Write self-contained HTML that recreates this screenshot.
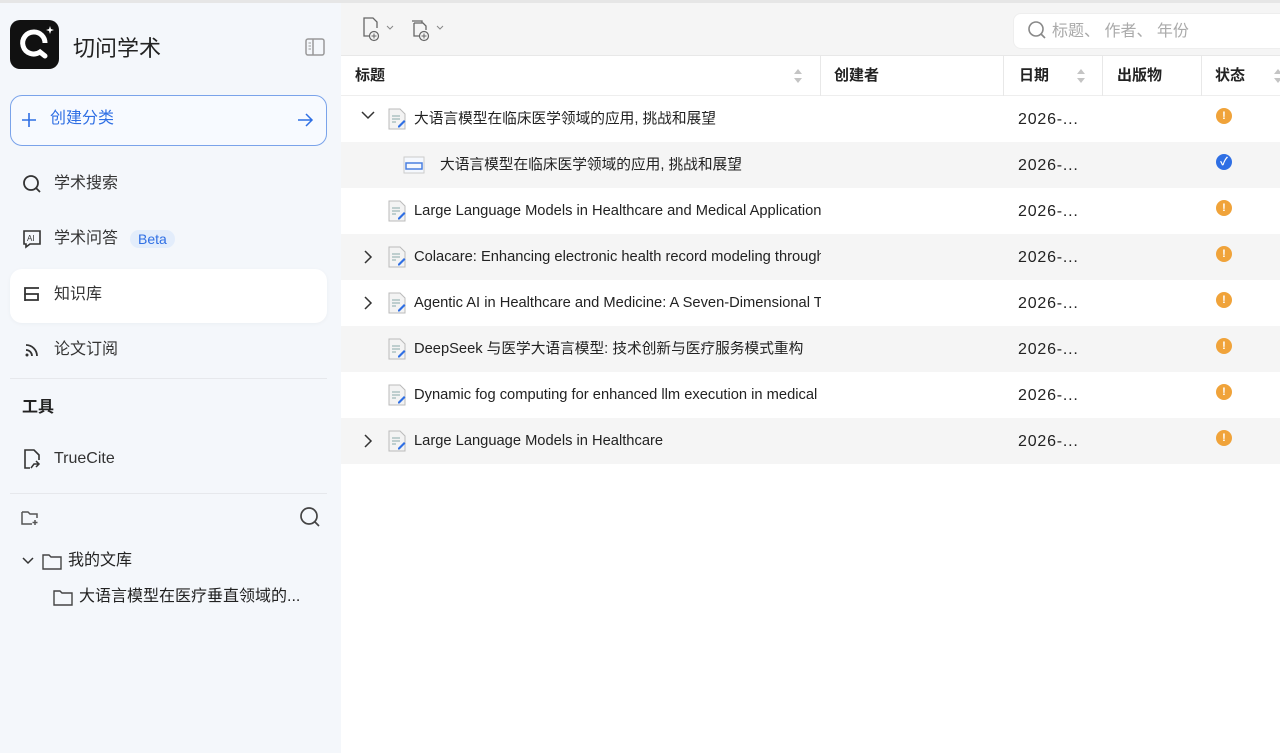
<!DOCTYPE html>
<html><head><meta charset="utf-8"><style>
*{box-sizing:border-box;margin:0;padding:0}
body{width:1280px;height:753px;overflow:hidden;font-family:"Liberation Sans","Noto Sans CJK SC",sans-serif;background:#fff;position:relative;color:#222;line-height:1.2}
.side{position:absolute;left:0;top:0;width:341px;height:753px;background:#f4f7fb;border-top:3px solid #e6e6e6}
.abs{position:absolute}
.nav{position:absolute;left:22px;font-size:16px;color:#333;display:flex;align-items:center;gap:12px}
.main{position:absolute;left:341px;top:0;right:0;height:753px}
.tb{position:absolute;left:0;top:0;right:0;height:56px;background:#f5f5f5;border-top:3px solid #e6e6e6;border-bottom:1px solid #e8e8e8}
.hd{position:absolute;top:56px;left:0;right:0;height:40px;background:#fff;border-bottom:1px solid #eee;font-size:15px;font-weight:bold;color:#222}
.hd span{position:absolute;top:11px}
.vl{position:absolute;top:56px;height:40px;width:1px;background:#e8e8e8}
.row{position:absolute;left:0;right:0;height:46px;font-size:14.7px;color:#222}
.row.g{background:#f5f5f5}
.row .t{position:absolute;top:15px;white-space:nowrap;overflow:hidden;width:407px}
.row .d{position:absolute;left:677px;top:14px;font-size:16px;letter-spacing:0.8px}
.st{position:absolute;left:875px;top:12px;width:16px;height:16px;border-radius:50%;background:#f0a33a;color:#fff;font-size:11px;text-align:center;line-height:16px;font-weight:bold}
.st.ok{background:#2f6fe4}
.doc{position:absolute;top:12px}
.chev{position:absolute;left:20px;top:14px}
.sort{position:absolute;top:12px;width:8px}
</style></head><body>
<div class="side">
  <div class="abs" style="left:10px;top:17px;width:49px;height:49px;background:#111;border-radius:10px">
    <svg width="49" height="49" viewBox="0 0 49 49"><path d="M24 12a11 11 0 1 0 6 20l5 4" fill="none" stroke="#fff" stroke-width="5" stroke-linecap="round"/><path d="M24 12a11 11 0 0 1 11 11" fill="none" stroke="#fff" stroke-width="5"/><path d="M40 6l1 3 3 1-3 1-1 3-1-3-3-1 3-1z" fill="#fff"/></svg>
  </div>
  <div class="abs" style="left:73px;top:33px;font-size:22px;color:#222">切问学术</div>
  <svg class="abs" style="left:305px;top:35px" width="20" height="18"><rect x="1" y="1" width="18" height="16" rx="2" fill="none" stroke="#999" stroke-width="1.5"/><line x1="8" y1="1" x2="8" y2="17" stroke="#999" stroke-width="1.5"/><line x1="3.5" y1="5" x2="6" y2="5" stroke="#999"/><line x1="3.5" y1="8" x2="6" y2="8" stroke="#999"/><line x1="3.5" y1="11" x2="6" y2="11" stroke="#999"/></svg>
  <div class="abs" style="left:10px;top:92px;width:317px;height:51px;border:1px solid #7aa3ea;border-radius:12px;background:#f7faff"></div>
  <svg class="abs" style="left:22px;top:110px" width="14" height="14"><path d="M7 0v14M0 7h14" stroke="#2f6fe4" stroke-width="1.6"/></svg>
  <div class="abs" style="left:50px;top:106px;font-size:16px;color:#2f6fe4">创建分类</div>
  <svg class="abs" style="left:297px;top:110px" width="17" height="14"><path d="M1 7h14M9 1l6 6-6 6" fill="none" stroke="#2f6fe4" stroke-width="1.5"/></svg>
  <div class="nav" style="top:171px"><svg width="20" height="20"><circle cx="9" cy="9" r="7" fill="none" stroke="#333" stroke-width="1.8"/><line x1="14" y1="14" x2="18" y2="18" stroke="#333" stroke-width="1.8"/></svg><span>学术搜索</span></div>
  <div class="nav" style="top:226px"><svg width="20" height="20"><path d="M2 2h16v13H8l-4 3v-3H2z" fill="none" stroke="#333" stroke-width="1.6"/><text x="5" y="12" font-size="8" font-family="Liberation Sans" fill="#333">AI</text></svg><span>学术问答</span><span style="background:#e3edfb;color:#2f6fe4;font-size:14px;padding:1px 8px;border-radius:9px;margin-left:0">Beta</span></div>
  <div class="abs" style="left:10px;top:266px;width:317px;height:54px;background:#fff;border-radius:12px;box-shadow:0 1px 4px rgba(0,0,0,.04)"></div>
  <div class="nav" style="top:282px"><svg width="20" height="20"><path d="M17 3H3v6h13v6H3" fill="none" stroke="#333" stroke-width="1.8"/><line x1="3" y1="9" x2="3" y2="16" stroke="#333" stroke-width="1.8"/></svg><span>知识库</span></div>
  <div class="nav" style="top:337px"><svg width="20" height="20"><circle cx="5" cy="15" r="1.5" fill="#333"/><path d="M4 10a6 6 0 0 1 6 6M4 5a11 11 0 0 1 11 11" fill="none" stroke="#333" stroke-width="1.8"/></svg><span>论文订阅</span></div>
  <div class="abs" style="left:10px;top:375px;width:317px;height:1px;background:#e6e8ec"></div>
  <div class="abs" style="left:22px;top:395px;font-size:16px;font-weight:bold;color:#222">工具</div>
  <div class="nav" style="top:445px"><svg width="20" height="22"><path d="M8 20H3V2h9l5 5v5" fill="none" stroke="#333" stroke-width="1.6"/><path d="M9 20l3-4h5M14 13l3 3-3 3" fill="none" stroke="#333" stroke-width="1.5"/></svg><span>TrueCite</span></div>
  <div class="abs" style="left:10px;top:490px;width:317px;height:1px;background:#e6e8ec"></div>
  <svg class="abs" style="left:21px;top:507px" width="18" height="16"><path d="M1 2h6l2 2h7v4M1 2v12h10" fill="none" stroke="#555" stroke-width="1.5"/><path d="M14 10v5M11.5 12.5h5" stroke="#555" stroke-width="1.5"/></svg>
  <svg class="abs" style="left:299px;top:503px" width="22" height="22"><circle cx="10" cy="10" r="8" fill="none" stroke="#444" stroke-width="1.7"/><line x1="16" y1="16" x2="20" y2="20" stroke="#444" stroke-width="1.7"/></svg>
  <svg class="abs" style="left:21px;top:553px" width="14" height="10"><path d="M2 2l5 5 5-5" fill="none" stroke="#333" stroke-width="1.5"/></svg>
  <svg class="abs" style="left:42px;top:550px" width="20" height="17"><path d="M1 2h6l2 2h10v12H1z" fill="none" stroke="#444" stroke-width="1.4"/></svg>
  <div class="abs" style="left:68px;top:548px;font-size:16px;color:#222">我的文库</div>
  <svg class="abs" style="left:53px;top:586px" width="20" height="17"><path d="M1 2h6l2 2h10v12H1z" fill="none" stroke="#444" stroke-width="1.4"/></svg>
  <div class="abs" style="left:79px;top:584px;font-size:16px;color:#222">大语言模型在医疗垂直领域的...</div>
</div>
<div class="main">
  <div class="tb">
    <svg class="abs" style="left:20px;top:13px" width="38" height="26"><path d="M12 20H3V2h9l4 4v6" fill="none" stroke="#666" stroke-width="1.3"/><circle cx="13" cy="20" r="4.5" fill="#f5f5f5" stroke="#666" stroke-width="1.2"/><path d="M13 17.5v5M10.5 20h5" stroke="#666"/><path d="M26 10l3 3 3-3" fill="none" stroke="#888"/></svg>
    <svg class="abs" style="left:68px;top:13px" width="38" height="26"><path d="M3 5h10v2M5 7v13h6M5 7h9l3 3v4" fill="none" stroke="#666" stroke-width="1.3"/><circle cx="15" cy="20" r="4.5" fill="#f5f5f5" stroke="#666" stroke-width="1.2"/><path d="M15 17.5v5M12.5 20h5" stroke="#666"/><path d="M28 10l3 3 3-3" fill="none" stroke="#888"/></svg>
    <div class="abs" style="left:672px;top:10px;width:280px;height:36px;background:#fff;border:1px solid #eee;border-radius:8px"></div>
    <svg class="abs" style="left:686px;top:17px" width="22" height="22"><circle cx="9" cy="9" r="7" fill="none" stroke="#888" stroke-width="1.6"/><line x1="14" y1="14" x2="18" y2="18" stroke="#888" stroke-width="1.6"/></svg>
    <div class="abs" style="left:711px;top:19px;font-size:16px;color:#aaa">标题、 作者、 年份</div>
  </div>
  <div class="hd">
    <span style="left:14px">标题</span><span style="left:493px">创建者</span><span style="left:678px">日期</span><span style="left:776px">出版物</span><span style="left:874px">状态</span>
  </div>
  <div class="vl" style="left:479px"></div><div class="vl" style="left:662px"></div><div class="vl" style="left:761px"></div><div class="vl" style="left:860px"></div>
  <svg class="sort" style="left:453px;top:68px" width="8" height="16"><path d="M0 6l4-5 4 5zM0 10l4 5 4-5z" fill="#c4c4c4"/></svg>
  <svg class="sort" style="left:736px;top:68px" width="8" height="16"><path d="M0 6l4-5 4 5zM0 10l4 5 4-5z" fill="#c4c4c4"/></svg>
  <svg class="sort" style="left:933px;top:68px" width="8" height="16"><path d="M0 6l4-5 4 5zM0 10l4 5 4-5z" fill="#c4c4c4"/></svg>

  <div class="row" style="top:96px"><svg class="chev" width="14" height="10"><path d="M1 2l6 6 6-6" fill="none" stroke="#333" stroke-width="1.5"/></svg><svg class="doc" style="left:46px" width="20" height="22"><path d="M2 1h11l5 5v15H2z" fill="#f3f3f3" stroke="#bbb"/><path d="M5 8h8M5 11h8M5 14h4" stroke="#8aa"/><path d="M11 18l6-6 1.5 1.5-6 6H11z" fill="#2f6fe4"/></svg><div class="t" style="left:73px">大语言模型在临床医学领域的应用, 挑战和展望</div><div class="d">2026-...</div><div class="st">!</div></div>
  <div class="row g" style="top:142px"><svg class="doc" style="left:62px;top:14px" width="22" height="18"><rect x="1" y="1" width="20" height="16" fill="#f5f8fd" stroke="#ccc"/><rect x="3" y="7" width="16" height="6" fill="none" stroke="#4a7fe0" stroke-width="1.5"/></svg><div class="t" style="left:99px">大语言模型在临床医学领域的应用, 挑战和展望</div><div class="d">2026-...</div><div class="st ok">✓</div></div>
  <div class="row" style="top:188px"><svg class="doc" style="left:46px" width="20" height="22"><path d="M2 1h11l5 5v15H2z" fill="#f3f3f3" stroke="#bbb"/><path d="M5 8h8M5 11h8M5 14h4" stroke="#8aa"/><path d="M11 18l6-6 1.5 1.5-6 6H11z" fill="#2f6fe4"/></svg><div class="t" style="left:73px">Large Language Models in Healthcare and Medical Applications</div><div class="d">2026-...</div><div class="st">!</div></div>
  <div class="row g" style="top:234px"><svg class="chev" style="left:22px;top:16px" width="10" height="14"><path d="M2 1l6 6-6 6" fill="none" stroke="#333" stroke-width="1.5"/></svg><svg class="doc" style="left:46px" width="20" height="22"><path d="M2 1h11l5 5v15H2z" fill="#f3f3f3" stroke="#bbb"/><path d="M5 8h8M5 11h8M5 14h4" stroke="#8aa"/><path d="M11 18l6-6 1.5 1.5-6 6H11z" fill="#2f6fe4"/></svg><div class="t" style="left:73px">Colacare: Enhancing electronic health record modeling through</div><div class="d">2026-...</div><div class="st">!</div></div>
  <div class="row" style="top:280px"><svg class="chev" style="left:22px;top:16px" width="10" height="14"><path d="M2 1l6 6-6 6" fill="none" stroke="#333" stroke-width="1.5"/></svg><svg class="doc" style="left:46px" width="20" height="22"><path d="M2 1h11l5 5v15H2z" fill="#f3f3f3" stroke="#bbb"/><path d="M5 8h8M5 11h8M5 14h4" stroke="#8aa"/><path d="M11 18l6-6 1.5 1.5-6 6H11z" fill="#2f6fe4"/></svg><div class="t" style="left:73px">Agentic AI in Healthcare and Medicine: A Seven-Dimensional Taxonomy</div><div class="d">2026-...</div><div class="st">!</div></div>
  <div class="row g" style="top:326px"><svg class="doc" style="left:46px" width="20" height="22"><path d="M2 1h11l5 5v15H2z" fill="#f3f3f3" stroke="#bbb"/><path d="M5 8h8M5 11h8M5 14h4" stroke="#8aa"/><path d="M11 18l6-6 1.5 1.5-6 6H11z" fill="#2f6fe4"/></svg><div class="t" style="left:73px">DeepSeek 与医学大语言模型: 技术创新与医疗服务模式重构</div><div class="d">2026-...</div><div class="st">!</div></div>
  <div class="row" style="top:372px"><svg class="doc" style="left:46px" width="20" height="22"><path d="M2 1h11l5 5v15H2z" fill="#f3f3f3" stroke="#bbb"/><path d="M5 8h8M5 11h8M5 14h4" stroke="#8aa"/><path d="M11 18l6-6 1.5 1.5-6 6H11z" fill="#2f6fe4"/></svg><div class="t" style="left:73px">Dynamic fog computing for enhanced llm execution in medical applications</div><div class="d">2026-...</div><div class="st">!</div></div>
  <div class="row g" style="top:418px"><svg class="chev" style="left:22px;top:16px" width="10" height="14"><path d="M2 1l6 6-6 6" fill="none" stroke="#333" stroke-width="1.5"/></svg><svg class="doc" style="left:46px" width="20" height="22"><path d="M2 1h11l5 5v15H2z" fill="#f3f3f3" stroke="#bbb"/><path d="M5 8h8M5 11h8M5 14h4" stroke="#8aa"/><path d="M11 18l6-6 1.5 1.5-6 6H11z" fill="#2f6fe4"/></svg><div class="t" style="left:73px">Large Language Models in Healthcare</div><div class="d">2026-...</div><div class="st">!</div></div>
</div>
</body></html>
